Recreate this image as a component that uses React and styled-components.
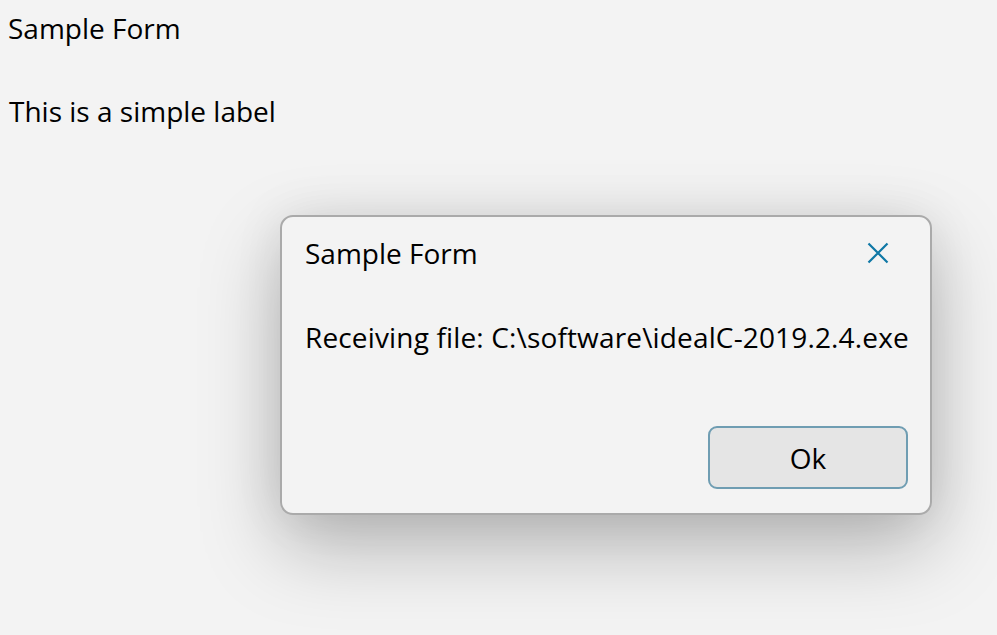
import styled, { createGlobalStyle } from "styled-components";

const GlobalStyle = createGlobalStyle`
    html, body {
        margin: 0;
        padding: 0;
        background: #f3f3f3;
    }
    body {
        font-family: "Open Sans", "Noto Sans", sans-serif;
        color: #000;
    }
`

const Page = styled.div`
    width: 997px;
    height: 635px;
    box-sizing: border-box;
    padding: 9px 0 0 8px;
    display: flex;
    flex-direction: column;
    overflow: hidden;
`

const Heading = styled.div`
    font-size: 28px;
    line-height: 38px;
`

const Label = styled.div`
    font-size: 28px;
    line-height: 38px;
    margin-top: 45px;
    padding-left: 1px;
`

const Dialog = styled.div`
    margin: 85px 0 0 272px;
    width: 652px;
    height: 300px;
    box-sizing: border-box;
    border: 2px solid #aaaaaa;
    border-radius: 13px;
    background: #f3f3f3;
    box-shadow: 0 32px 80px rgba(0, 0, 0, 0.26), 0 0 50px rgba(0, 0, 0, 0.08);
    display: flex;
    flex-direction: column;
    padding: 17px 22px 0 23px;
    flex-shrink: 0;
`

const TitleRow = styled.div`
    display: flex;
    align-items: center;
    justify-content: space-between;
    height: 38px;
`

const Title = styled.div`
    font-size: 28px;
    line-height: 38px;
`

const CloseButton = styled.button`
    border: none;
    background: none;
    padding: 0;
    width: 40px;
    height: 38px;
    display: flex;
    align-items: center;
    justify-content: center;
    margin-right: 10px;
    cursor: pointer;
`

const Message = styled.div`
    font-size: 28px;
    line-height: 38px;
    margin-top: 46px;
    white-space: nowrap;
    letter-spacing: 0.15px;
`

const Footer = styled.div`
    margin-top: auto;
    margin-bottom: 24px;
    display: flex;
    justify-content: flex-end;
`

const OkButton = styled.button`
    width: 200px;
    height: 63px;
    box-sizing: border-box;
    border: 2px solid #6f9db2;
    border-radius: 9px;
    background: #e5e5e5;
    font-family: inherit;
    font-size: 28px;
    color: #000;
    cursor: pointer;
`

export default function App () {
    return (
        <Page>
            <GlobalStyle/>
            <Heading>Sample Form</Heading>
            <Label>This is a simple label</Label>
            <Dialog>
                <TitleRow>
                    <Title>Sample Form</Title>
                    <CloseButton aria-label="Close">
                        <svg width="22" height="22" viewBox="0 0 22 22">
                            <path d="M1.5 1.5 L20.5 20.5 M20.5 1.5 L1.5 20.5" stroke="#0f78a6" strokeWidth="2.2" fill="none"/>
                        </svg>
                    </CloseButton>
                </TitleRow>
                <Message>Receiving file: C:\software\idealC-2019.2.4.exe</Message>
                <Footer>
                    <OkButton>Ok</OkButton>
                </Footer>
            </Dialog>
        </Page>
    )
}
